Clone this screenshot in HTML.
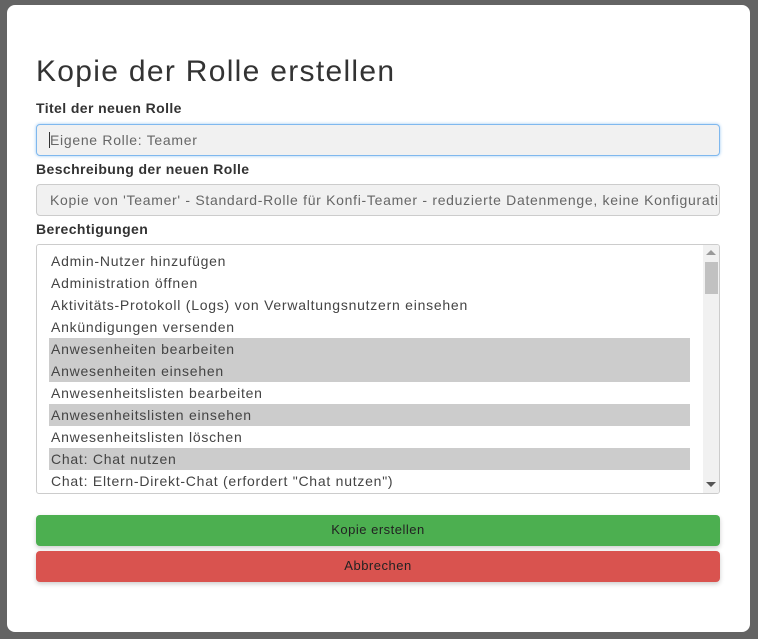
<!DOCTYPE html><html><head><style>
body{margin:0;width:758px;height:639px;background:#646464;font-family:"Liberation Sans",sans-serif;position:relative;overflow:hidden}
.m{position:absolute;left:7px;top:5px;width:743px;height:627px;background:#fff;border-radius:8px}
.a{position:absolute;left:29px;right:30px}
h1{position:absolute;left:29px;top:50px;margin:0;font-weight:normal;font-size:30px;letter-spacing:1.3px;color:#333}
.l{font-weight:bold;font-size:14px;letter-spacing:0.4px;color:#333}
.in{height:32px;box-sizing:border-box;border:1px solid #ccc;border-radius:4px;background:#f1f1f1;color:#666;font-size:14px;letter-spacing:0.7px;line-height:30px;padding-left:13px;white-space:nowrap;overflow:hidden}
.lst{top:239px;height:250px;border:1px solid #ccc;border-radius:3px;box-sizing:border-box;overflow:hidden}
.r{position:absolute;left:12px;width:639px;height:22px;line-height:22px;font-size:14px;letter-spacing:0.75px;color:#444;padding-left:2px}
.s{background:#ccc}
.sb{position:absolute;right:0;top:0;width:16px;height:248px;background:#f1f1f1}
.b{height:31px;border-radius:4px;text-align:center;line-height:30px;font-size:13px;letter-spacing:0.5px;color:#222;box-shadow:0 2px 5px rgba(0,0,0,.2)}
</style></head><body>
<div class="m">
<h1>Kopie der Rolle erstellen</h1>
<div class="a l" style="top:95px">Titel der neuen Rolle</div>
<div class="a in" style="top:119px;border-color:#7fb8ee;box-shadow:0 0 3px #9cc8f2"><span style="border-left:1px solid #333;margin-left:-1px"></span>Eigene Rolle: Teamer</div>
<div class="a l" style="top:156px">Beschreibung der neuen Rolle</div>
<div class="a in" style="top:179px">Kopie von 'Teamer' - Standard-Rolle für Konfi-Teamer - reduzierte Datenmenge, keine Konfiguration</div>
<div class="a l" style="top:216px">Berechtigungen</div>
<div class="a lst">
<div class="r" style="top:5px">Admin-Nutzer hinzufügen</div>
<div class="r" style="top:27px">Administration öffnen</div>
<div class="r" style="top:49px">Aktivitäts-Protokoll (Logs) von Verwaltungsnutzern einsehen</div>
<div class="r" style="top:71px">Ankündigungen versenden</div>
<div class="r s" style="top:93px">Anwesenheiten bearbeiten</div>
<div class="r s" style="top:115px">Anwesenheiten einsehen</div>
<div class="r" style="top:137px">Anwesenheitslisten bearbeiten</div>
<div class="r s" style="top:159px">Anwesenheitslisten einsehen</div>
<div class="r" style="top:181px">Anwesenheitslisten löschen</div>
<div class="r s" style="top:203px">Chat: Chat nutzen</div>
<div class="r" style="top:225px">Chat: Eltern-Direkt-Chat (erfordert "Chat nutzen")</div>
<div class="sb"><div style="position:absolute;left:3px;top:5px;width:0;height:0;border:5px solid transparent;border-bottom:5px solid #999;border-top:0"></div><div style="position:absolute;left:2px;top:17px;width:13px;height:32px;background:#c1c1c1"></div><div style="position:absolute;left:3px;bottom:6px;border:5px solid transparent;border-top:5px solid #555;border-bottom:0"></div></div>
</div>
<div class="a b" style="top:510px;background:#4caf50">Kopie erstellen</div>
<div class="a b" style="top:546px;background:#d9534f">Abbrechen</div>
</div>
</body></html>
